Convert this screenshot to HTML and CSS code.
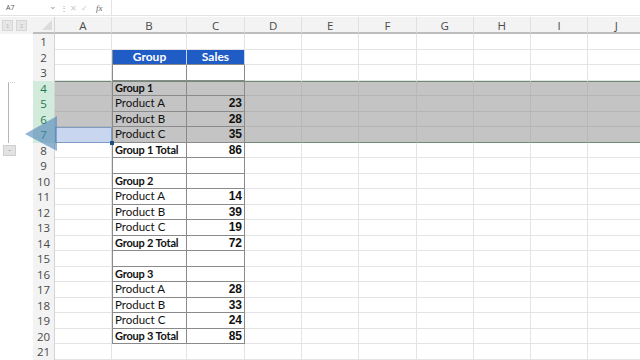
FILE: index.html
```html
<!DOCTYPE html>
<html lang="en">
<head>
<meta charset="UTF-8">
<meta name="viewport" content="width=device-width, initial-scale=1.0">
<title>Group sales</title>
<link rel="stylesheet" href="styles.css">
</head>
<body>
<div class="fbar">
    <div class="namebox">A7</div>
    <span class="chev">&#8964;</span>
    <span class="dots">&#8942;</span>
    <span class="fbtn">&#10005;</span>
    <span class="fbtn">&#10003;</span>
    <span class="fx"><i>fx</i></span>
    <div class="finput"></div>
</div>
<div class="main">
    <div class="outline">
        <div class="levels">
            <span class="lvl">1</span>
            <span class="lvl">2</span>
        </div>
        <div class="spacer"></div>
        <div class="bracket"></div>
        <div class="minus">-</div>
    </div>
    <div class="sheet" id="sheet">
        <!-- filled by the script below -->
    </div>
    <svg class="arrow" width="40" height="40" viewBox="0 0 40 40">
        <polygon points="0,18 32,0 32,35" fill="rgba(82,135,185,0.62)"/>
    </svg>
</div>

<script>
    const sheet = document.getElementById('sheet');
    const cols = ['A', 'B', 'C', 'D', 'E', 'F', 'G', 'H', 'I', 'J'];

    // rows of the little table in B:C
    const table = {
        2: ['Group', 'Sales'],
        3: ['', ''],
        4: ['Group 1', ''],
        5: ['Product A', 23],
        6: ['Product B', 28],
        7: ['Product C', 35],
        8: ['Group 1 Total', 86],
        9: ['', ''],
        10: ['Group 2', ''],
        11: ['Product A', 14],
        12: ['Product B', 39],
        13: ['Product C', 19],
        14: ['Group 2 Total', 72],
        15: ['', ''],
        16: ['Group 3', ''],
        17: ['Product A', 28],
        18: ['Product B', 33],
        19: ['Product C', 24],
        20: ['Group 3 Total', 85]
    };
    const boldRows = [4, 8, 10, 14, 16, 20];

    // header row
    const corner = document.createElement('div');
    corner.className = 'corner';
    sheet.appendChild(corner);
    cols.forEach(c => {
        const h = document.createElement('div');
        h.className = 'colhead';
        h.textContent = c;
        sheet.appendChild(h);
    });

    for (let r = 1; r <= 21; r++) {
        const inBand = r >= 4 && r <= 7;
        const rh = document.createElement('div');
        rh.className = 'rowhead' + (inBand ? ' on' : '');
        rh.textContent = r;
        sheet.appendChild(rh);

        cols.forEach((c, i) => {
            const cell = document.createElement('div');
            cell.className = 'cell';
            if (inBand) cell.classList.add('band');
            if (r === 4) cell.classList.add('band-top');
            if (r === 7) cell.classList.add('band-bottom');

            if (table[r] && (c === 'B' || c === 'C')) {
                const val = table[r][i - 1];
                cell.classList.add('tb');
                if (c === 'B') cell.classList.add('tb-left');
                if (r === 2) {
                    cell.classList.add('th');
                } else if (c === 'C') {
                    cell.classList.add('num');
                }
                if (boldRows.includes(r) && c === 'B') cell.classList.add('bold');
                cell.textContent = val;
            }
            if (c === 'A' && r === 7) cell.classList.add('sel');
            sheet.appendChild(cell);
        });
    }
</script>
</body>
</html>
```
FILE: styles.css
```css
body {
    margin: 0;
    background: #ffffff;
    font-family: Lato, "Liberation Sans", sans-serif;
    overflow: hidden;
}

/*------------------ Formula bar ---------------------- */
.fbar {
    display: flex;
    align-items: center;
    height: 15px;
    background: #ffffff;
    border-bottom: 1px solid #e3e3e3;
    font-family: "Open Sans", sans-serif;
    color: #9a9a9a;
}

.namebox {
    width: 43px;
    padding-left: 6px;
    font-size: 7px;
    color: #555;
}

.chev {
    font-size: 9px;
    width: 11px;
    margin-top: -4px;
}

.dots {
    font-size: 8px;
    width: 10px;
}

.fbtn {
    font-size: 8px;
    width: 11px;
    color: #c9c9c9;
}

.fx {
    font-family: "Liberation Serif", serif;
    font-size: 9px;
    color: #666;
    width: 12px;
    margin-left: 4px;
}

.finput {
    flex: 1;
    height: 15px;
    margin-left: 3px;
    border-left: 1px solid #e3e3e3;
}

/*------------------ Sheet ---------------------- */
.main {
    display: flex;
    position: relative;
    margin-top: 1px;
}

.outline {
    width: 33px;
    flex-shrink: 0;
    display: flex;
    flex-direction: column;
    background: #ffffff;
}

.levels {
    height: 17px;
    display: flex;
    gap: 3px;
    align-items: center;
    padding-left: 2px;
    background: #f3f3f3;
}

.lvl {
    width: 11px;
    height: 11px;
    background: #e6e6e6;
    border: 1px solid #d6d6d6;
    box-sizing: border-box;
    font-size: 6px;
    color: #bbbbbb;
    text-align: center;
    line-height: 9px;
}

.spacer {
    height: 48px;
}

.bracket {
    height: 60px;
    margin-left: 8px;
    width: 6px;
    border-left: 1px solid #b5b5b5;
    border-top: 1px dotted #d0d0d0;
}

.minus {
    width: 11px;
    height: 9px;
    margin: 2px 0 0 3px;
    background: #e2e2e2;
    border: 1px solid #cfcfcf;
    font-size: 7px;
    line-height: 8px;
    text-align: center;
    color: #888;
}

.sheet {
    flex-shrink: 0;
    display: grid;
    grid-template-columns: 22px 57px 75px 58px repeat(7, 57.2px);
    grid-template-rows: 17px repeat(21, 15.5px);
}

.corner {
    background: #f3f3f3;
    border-bottom: 2px solid #bdbdbd;
    border-right: 1px solid #d4d4d4;
    position: relative;
}

.corner::after {
    content: '';
    position: absolute;
    right: 2px;
    bottom: 2px;
    border-left: 10px solid transparent;
    border-bottom: 10px solid #dcdcdc;
}

.colhead {
    background: #f3f3f3;
    border-bottom: 2px solid #bdbdbd;
    border-right: 1px solid #e0e0e0;
    font-family: "Open Sans", sans-serif;
    font-size: 11.5px;
    color: #4a4a4a;
    text-align: center;
    line-height: 17px;
}

.rowhead {
    background: #f3f3f3;
    border-right: 1px solid #d4d4d4;
    font-family: "Open Sans", sans-serif;
    font-size: 11.5px;
    color: #4a4a4a;
    text-align: center;
    line-height: 16px;
}

.rowhead.on {
    background: #d3ebdc;
    color: #1e7a48;
}

.cell {
    box-sizing: border-box;
    border-right: 1px solid #e4e4e4;
    border-bottom: 1px solid #e4e4e4;
    font-size: 11.5px;
    color: #111;
    line-height: 14px;
    padding: 0 2px;
    white-space: nowrap;
    overflow: visible;
}

.band {
    background: #c4c4c4;
    border-right-color: #b8b8b8;
    border-bottom-color: #b4b4b4;
}

.band-top {
    box-shadow: inset 0 1px 0 #6f8878;
}

.band-bottom {
    border-bottom: 1px solid #6f8878;
}

.tb {
    border-right: 1px solid #8a8a8a;
    border-bottom: 1px solid #8a8a8a;
}

.tb-left {
    border-left: 1px solid #8a8a8a;
}

.th {
    background: #1f5cc6;
    color: #ffffff;
    font-weight: bold;
    font-size: 12px;
    text-align: center;
    border-right-color: #c8d4ea;
    border-bottom-color: #8a8a8a;
}

.num {
    text-align: right;
    font-family: "Liberation Sans", sans-serif;
    font-weight: bold;
    font-size: 12px;
}

.bold {
    font-weight: bold;
    font-size: 11px;
    letter-spacing: -0.2px;
}

.sel {
    background: #c8d7ef;
    border: 1px solid #7f9cc4;
    position: relative;
}

.sel::after {
    content: '';
    position: absolute;
    right: -3px;
    bottom: -3px;
    width: 4px;
    height: 4px;
    background: #1e4f7a;
}

/*------------------ Arrow overlay ---------------------- */
.arrow {
    position: absolute;
    left: 25px;
    top: 99px;
}
```
